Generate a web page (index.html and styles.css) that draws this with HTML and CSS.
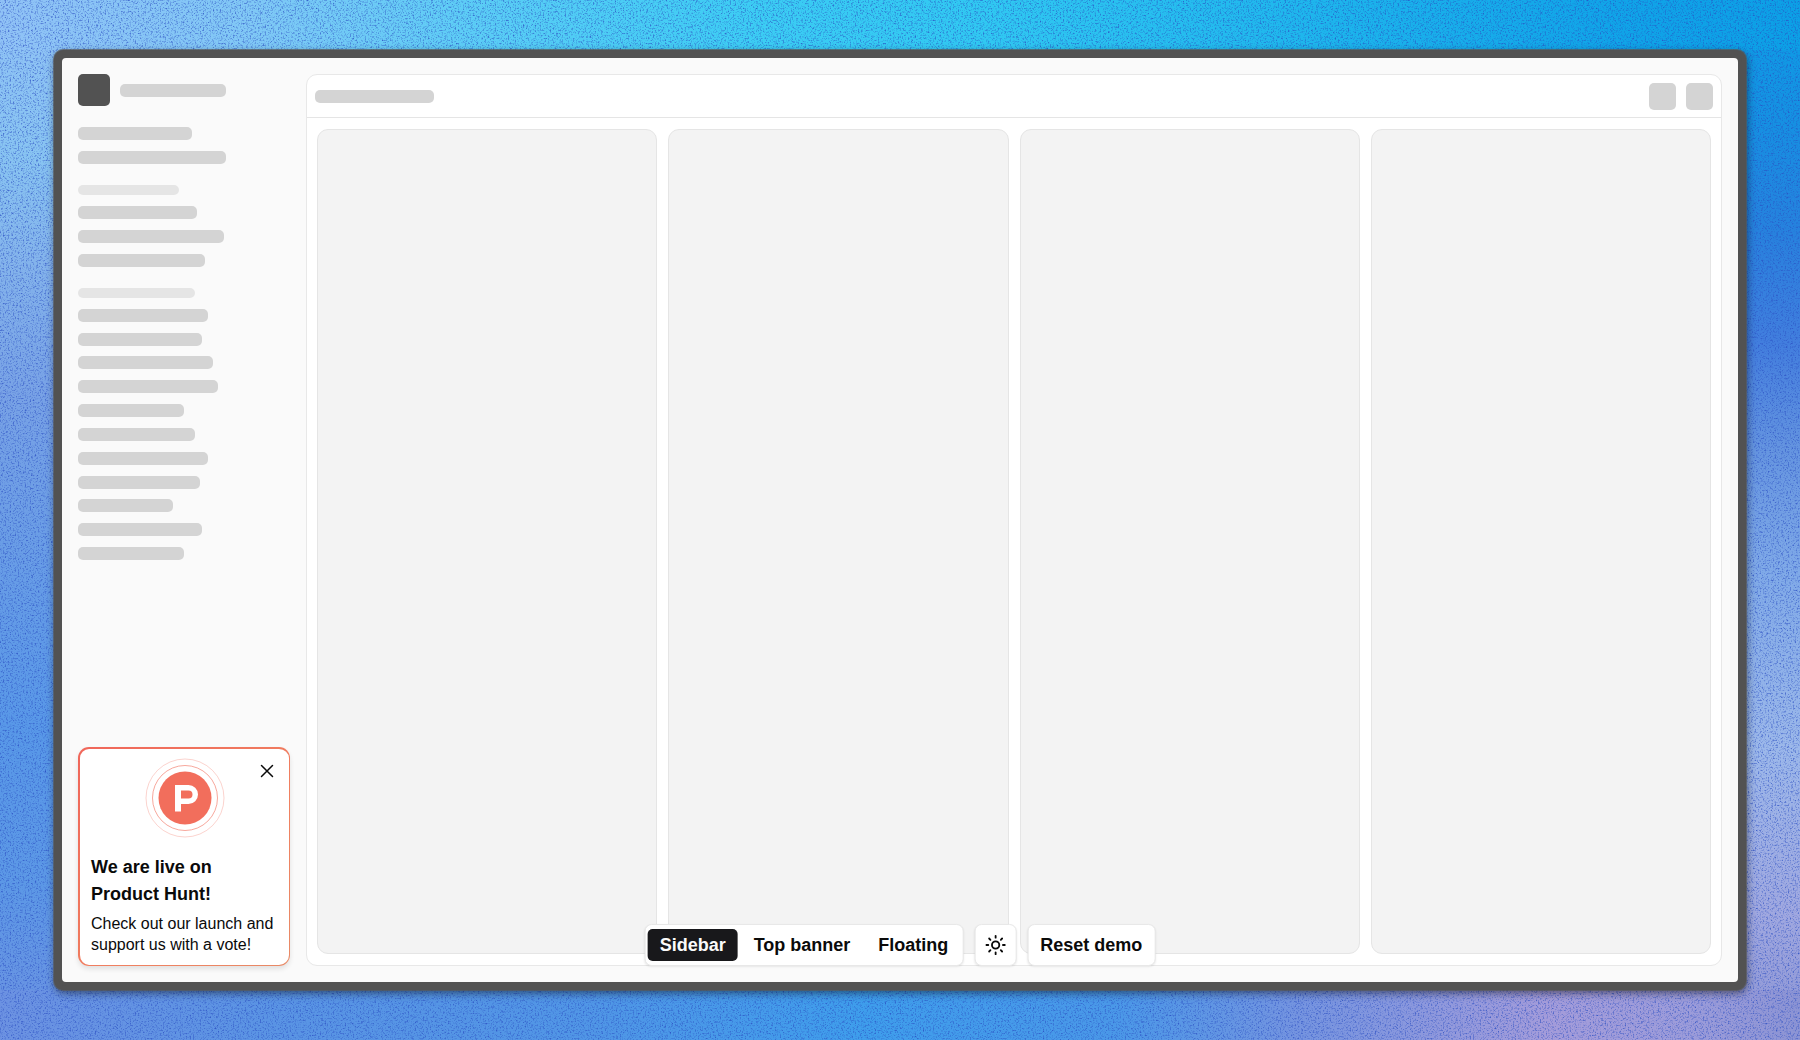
FILE: index.html
```html
<!DOCTYPE html>
<html lang="en">
<head>
  <meta charset="utf-8">
  <meta name="viewport" content="width=device-width, initial-scale=1">
  <title>Launch banner demo</title>
  <link rel="stylesheet" href="styles.css">
</head>
<body class="stage">
  <svg class="grain" aria-hidden="true">
    <filter id="grain" x="0" y="0" width="100%" height="100%" color-interpolation-filters="sRGB">
      <feTurbulence type="fractalNoise" baseFrequency="0.6" numOctaves="3" seed="4"/>
      <feColorMatrix values="0 0 0 0 0.16  0 0 0 0 0.3  0 0 0 0 0.76  2 0 0 0 -0.98"/>
    </filter>
    <rect width="100%" height="100%" filter="url(#grain)"/>
  </svg>

  <div class="window">
    <aside class="sidebar">
      <div class="brand">
        <span class="logo"></span>
        <span class="bar" style="width:106px"></span>
      </div>
      <div class="group">
        <span class="bar" style="width:114px"></span>
        <span class="bar" style="width:148px"></span>
      </div>
      <div class="group">
        <span class="bar label" style="width:101px"></span>
        <span class="bar" style="width:119px"></span>
        <span class="bar" style="width:146px"></span>
        <span class="bar" style="width:127px"></span>
      </div>
      <div class="group long">
        <span class="bar label" style="width:117px"></span>
        <span class="bar" style="width:130px"></span>
        <span class="bar" style="width:124px"></span>
        <span class="bar" style="width:135px"></span>
        <span class="bar" style="width:140px"></span>
        <span class="bar" style="width:106px"></span>
        <span class="bar" style="width:117px"></span>
        <span class="bar" style="width:130px"></span>
        <span class="bar" style="width:122px"></span>
        <span class="bar" style="width:95px"></span>
        <span class="bar" style="width:124px"></span>
        <span class="bar" style="width:106px"></span>
      </div>

      <section class="launch">
        <button class="close" type="button" aria-label="Close">
          <svg width="14" height="14" viewBox="0 0 14 14"><path d="M1.500 1.500l11 11M12.500 1.500l-11 11"/></svg>
        </button>
        <svg class="badge" width="80" height="80" viewBox="0 0 80 80" aria-hidden="true">
          <circle class="ring outer" cx="40" cy="40" r="39"/>
          <circle class="ring inner" cx="40" cy="40" r="32.5"/>
          <circle class="disc" cx="40" cy="40" r="26.5"/>
          <path class="mark" fill-rule="evenodd" d="M30 27h13.500a9.500 9.500 0 0 1 0 19H36v7.500h-6zM36 32.500v8h7.500a4 4 0 0 0 0-8z"/>
        </svg>
        <h2 class="title">We are live on Product Hunt!</h2>
        <p class="text">Check out our launch and support us with a vote!</p>
      </section>
    </aside>

    <main class="panel">
      <header class="panel-head">
        <span class="bar" style="width:119px"></span>
        <span class="tools"><span class="tool"></span><span class="tool"></span></span>
      </header>
      <div class="columns">
        <div class="column"></div>
        <div class="column"></div>
        <div class="column"></div>
        <div class="column"></div>
      </div>
    </main>

    <nav class="controls" aria-label="Demo controls">
      <div class="box">
        <button class="option active" type="button">Sidebar</button>
        <button class="option" type="button">Top banner</button>
        <button class="option" type="button">Floating</button>
      </div>
      <button class="box theme" type="button" aria-label="Toggle theme">
        <svg width="22" height="22" viewBox="0 0 24 24"><circle cx="12" cy="12" r="4"/><path d="M12 2v2M12 20v2M4.930 4.930l1.410 1.410M17.660 17.660l1.410 1.410M2 12h2M20 12h2M6.340 17.660l-1.410 1.410M19.070 4.930l-1.410 1.410"/></svg>
      </button>
      <button class="box reset" type="button">Reset demo</button>
    </nav>
  </div>
</body>
</html>
```
FILE: styles.css
```css
* {
  box-sizing: border-box;
}

body.stage {
  position: relative;
  display: flex;
  min-height: 100vh;
  margin: 0;
  padding: 50px 54px;
  font-family: "Liberation Sans", Arial, sans-serif;
  color: #0a0a0a;
  background:
    linear-gradient(90deg, #90c2f6 0%, #80c8f6 14%, #5ccdf6 26%, #3ccdf4 42%, #30c8f2 55%, #1cb4ec 75%, #10a4e8 90%, #0ca0e6 100%) top / 100% 50px no-repeat,
    linear-gradient(90deg, #6c92e2 0%, #5a94e4 15%, #5096e6 33%, #3e9eec 48%, #4a98e8 62%, #7494e0 72%, #a49cda 86%, #9c9cda 94%, #8c94d4 100%) bottom / 100% 50px no-repeat,
    linear-gradient(180deg, #90c2f6 0%, #88c4f2 15%, #84b4ec 25%, #78a2e6 38%, #6c9ee6 50%, #5898e8 70%, #5c98e6 85%, #6c92e2 100%) left / 50% 100% no-repeat,
    linear-gradient(180deg, #0ca0e6 0%, #1690e2 12%, #2682de 22%, #427ede 33%, #6494e0 43%, #80aae8 55%, #9cb8ea 72%, #a0a8e0 88%, #8c94d4 100%) right / 50% 100% no-repeat;
}

.grain {
  position: absolute;
  inset: 0;
  width: 100%;
  height: 100%;
}

.window {
  position: relative;
  flex: 1;
  display: flex;
  gap: 16px;
  padding: 16px;
  border: 8px solid #525252;
  border-radius: 9px;
  background: #fafafa;
  box-shadow: 0 0 0 1px rgba(90, 90, 90, 0.7), 1px 3px 8px rgba(0, 0, 0, 0.5);
}

/* rounds the inner corners of the frame */
.window::before {
  content: "";
  position: absolute;
  inset: -4px;
  border: 4px solid #525252;
  border-radius: 8px;
  pointer-events: none;
}

.sidebar {
  display: flex;
  flex-direction: column;
  width: 212px;
}

.brand {
  display: flex;
  align-items: center;
  gap: 10px;
  margin-bottom: 21px;
}

.logo {
  width: 32px;
  height: 32px;
  border-radius: 5px;
  background: #525252;
}

.bar {
  height: 13px;
  border-radius: 5px;
  background: #d4d4d4;
}

.group {
  display: flex;
  flex-direction: column;
  gap: 11px;
  margin-bottom: 21px;
}

.label {
  height: 10px;
  background: #e5e5e5;
}

.long {
  justify-content: space-between;
  gap: 0;
  height: 272px;
}

.launch {
  position: relative;
  display: flex;
  flex-direction: column;
  margin-top: auto;
  padding: 9px 11px 10px;
  border: 2px solid transparent;
  border-width: 2px 1px 1px 2px;
  border-radius: 11px;
  background:
    linear-gradient(#fff, #fff) padding-box,
    linear-gradient(135deg, #f0665a, #f08060 60%, #e88a66) border-box;
  box-shadow: 0 3px 5px rgba(0, 0, 0, 0.1);
}

.close {
  position: absolute;
  top: 10px;
  right: 10px;
  display: flex;
  padding: 5px;
  border: 0;
  background: none;
}

.close svg,
.theme svg {
  fill: none;
  stroke: #0a0a0a;
  stroke-width: 1.5;
  stroke-linecap: round;
}

.theme svg {
  stroke-width: 2;
}

.badge {
  align-self: center;
  margin-bottom: 16px;
}

.ring {
  fill: none;
  stroke: #f26e5c;
}

.outer {
  opacity: 0.3;
}

.inner {
  opacity: 0.6;
}

.disc {
  fill: #f26e5c;
}

.mark {
  fill: #fff;
}

.title {
  margin: 0 0 5px;
  font-size: 18px;
  line-height: 27px;
}

.text {
  margin: 0;
  font-size: 16px;
  line-height: 21px;
}

.panel {
  flex: 1;
  display: flex;
  flex-direction: column;
  border: 1px solid #e8e8e8;
  border-radius: 11px;
  background: #fff;
}

.panel-head {
  display: flex;
  align-items: center;
  justify-content: space-between;
  height: 43px;
  padding: 0 8px;
  border-bottom: 1px solid #e5e5e5;
}

.tools {
  display: flex;
  gap: 10px;
}

.tool {
  width: 27px;
  height: 27px;
  border-radius: 5px;
  background: #d4d4d4;
}

.columns {
  flex: 1;
  display: grid;
  grid-template-columns: repeat(4, 1fr);
  gap: 11px;
  padding: 11px 10px;
}

.column {
  border: 1px solid #e5e5e5;
  border-radius: 11px;
  background: #f3f3f3;
}

.controls {
  position: absolute;
  bottom: 16px;
  left: 50%;
  display: flex;
  gap: 11px;
  transform: translateX(-50%);
}

.box {
  display: flex;
  align-items: center;
  height: 42px;
  padding: 0 2px;
  border: 1px solid #e8e8e8;
  border-radius: 7px;
  background: #fff;
  box-shadow: 0 1px 2px rgba(0, 0, 0, 0.08);
}

.option,
.reset {
  color: #0a0a0a;
  font: bold 18px/20px "Liberation Sans", Arial, sans-serif;
}

.option {
  height: 32px;
  padding: 0 12px;
  border: 0;
  border-radius: 5px;
  background: none;
}

.option + .option {
  margin-left: 4px;
}

.active {
  color: #fafafa;
  background: #18181b;
}

.theme {
  padding: 0 9px;
}

.reset {
  padding: 0 12px;
}
```
